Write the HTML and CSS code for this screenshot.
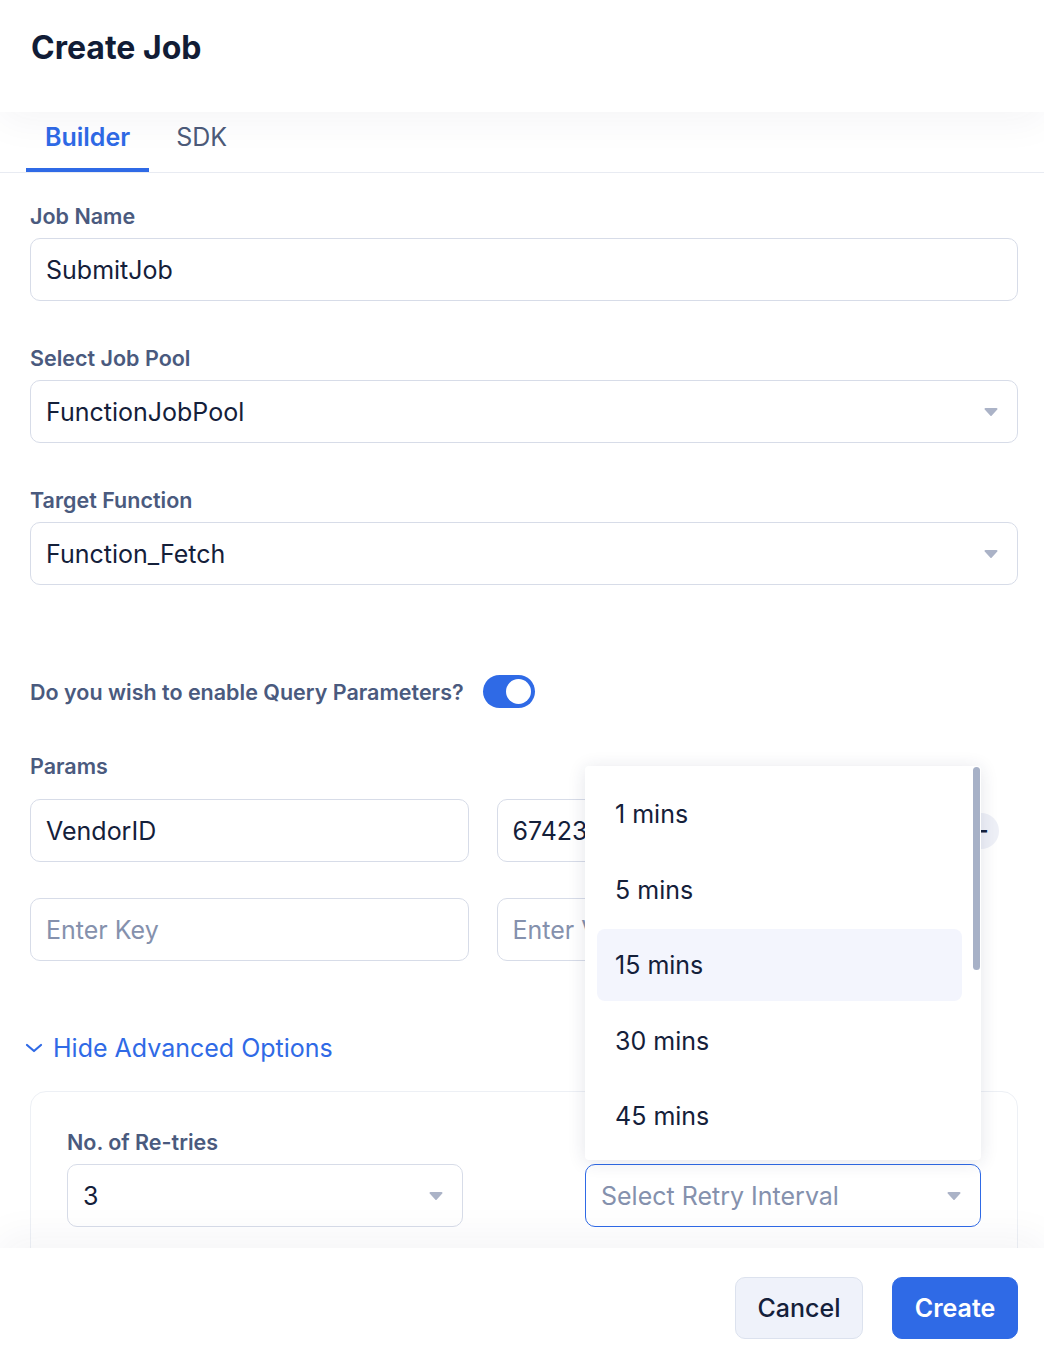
FILE: index.html
```html
<!DOCTYPE html>
<html lang="en">
<head>
    <meta charset="UTF-8">
    <meta name="viewport" content="width=device-width, initial-scale=1.0">
    <title>Create Job</title>
    <link rel="stylesheet" href="styles.css">
</head>
<body>
    <div class="modal-header">
        <h1>Create Job</h1>
    </div>

    <div class="tabs">
        <div class="tab active">Builder</div>
        <div class="tab">SDK</div>
    </div>

    <div class="modal-body">
        <div class="field">
            <label for="jobName">Job Name</label>
            <input type="text" id="jobName" value="SubmitJob">
        </div>

        <div class="field">
            <label>Select Job Pool</label>
            <div class="select-box">
                <span>FunctionJobPool</span>
                <svg class="caret" width="14" height="9" viewBox="0 0 14 9"><path d="M1.5 1h11a1 1 0 0 1 .8 1.6l-5.5 5.8a1 1 0 0 1-1.6 0L.7 2.6A1 1 0 0 1 1.5 1z" fill="#abb3c7"/></svg>
            </div>
        </div>

        <div class="field">
            <label>Target Function</label>
            <div class="select-box">
                <span>Function_Fetch</span>
                <svg class="caret" width="14" height="9" viewBox="0 0 14 9"><path d="M1.5 1h11a1 1 0 0 1 .8 1.6l-5.5 5.8a1 1 0 0 1-1.6 0L.7 2.6A1 1 0 0 1 1.5 1z" fill="#abb3c7"/></svg>
            </div>
        </div>

        <div class="toggle-row">
            <span>Do you wish to enable Query Parameters?</span>
            <div class="toggle on"><div class="knob"></div></div>
        </div>

        <div class="params">
            <label>Params</label>
            <div class="param-row">
                <input type="text" value="VendorID">
                <input type="text" value="674231">
                <button class="remove-btn">&minus;</button>
            </div>
            <div class="param-row">
                <input type="text" placeholder="Enter Key">
                <input type="text" placeholder="Enter Value">
            </div>
        </div>

        <div class="advanced-toggle">
            <svg width="18" height="10" viewBox="0 0 18 10"><path d="M2 2l7 6 7-6" fill="none" stroke="#2f6ae6" stroke-width="2.2" stroke-linecap="round" stroke-linejoin="round"/></svg>
            <span>Hide Advanced Options</span>
        </div>

        <div class="advanced-card">
            <div class="adv-grid">
                <div class="adv-field">
                    <label>No. of Re-tries</label>
                    <div class="select-box">
                        <span>3</span>
                        <svg class="caret" width="14" height="9" viewBox="0 0 14 9"><path d="M1.5 1h11a1 1 0 0 1 .8 1.6l-5.5 5.8a1 1 0 0 1-1.6 0L.7 2.6A1 1 0 0 1 1.5 1z" fill="#abb3c7"/></svg>
                    </div>
                </div>
                <div class="adv-field">
                    <label>Retry Interval</label>
                    <div class="select-wrap">
                        <div class="dropdown">
                            <div class="option">1 mins</div>
                            <div class="option">5 mins</div>
                            <div class="option hover">15 mins</div>
                            <div class="option">30 mins</div>
                            <div class="option">45 mins</div>
                            <div class="scroll-thumb"></div>
                        </div>
                        <div class="select-box focused">
                            <span class="placeholder">Select Retry Interval</span>
                            <svg class="caret" width="14" height="9" viewBox="0 0 14 9"><path d="M1.5 1h11a1 1 0 0 1 .8 1.6l-5.5 5.8a1 1 0 0 1-1.6 0L.7 2.6A1 1 0 0 1 1.5 1z" fill="#abb3c7"/></svg>
                        </div>
                    </div>
                </div>
            </div>
        </div>
    </div>

    <div class="modal-footer">
        <button class="btn cancel">Cancel</button>
        <button class="btn create">Create</button>
    </div>
</body>
</html>
```

FILE: styles.css
```css
* {
    box-sizing: border-box;
}

body {
    margin: 0;
    height: 100vh;
    display: flex;
    flex-direction: column;
    overflow: hidden;
    background-color: white;
    font-family: Inter, "Noto Sans", sans-serif;
    color: #14203a;
}

.modal-header {
    height: 112px;
    padding: 28px 31px 0;
    background-color: white;
    position: relative;
    z-index: 2;
    box-shadow: 0 8px 40px rgba(30, 45, 80, 0.05);
}

.modal-header h1 {
    margin: 0;
    font-size: 32px;
    line-height: 40px;
    font-weight: 700;
    color: #111c36;
}

.tabs {
    height: 61px;
    display: flex;
    gap: 8px;
    padding-left: 26px;
    border-bottom: 1px solid #e8ebf2;
}

.tab {
    display: flex;
    align-items: center;
    padding: 0 19px 6px;
    font-size: 25px;
    color: #4d5b79;
    border-bottom: 4px solid transparent;
}

.tab.active {
    color: #2f6ae6;
    font-weight: 600;
    border-bottom-color: #2f6ae6;
}

.modal-body {
    flex: 1;
    overflow: hidden;
    padding: 31px 26px 0 30px;
}

label {
    display: block;
    font-size: 21.5px;
    line-height: 24px;
    font-weight: 600;
    color: #4a5a7e;
}

.field {
    margin-bottom: 45px;
}

.field label {
    margin-bottom: 10px;
}

input {
    width: 100%;
    height: 63px;
    padding: 0 15px;
    border: 1px solid #d7dce8;
    border-radius: 10px;
    font-family: inherit;
    font-size: 25px;
    color: #14203a;
    background: white;
    outline: none;
}

input::placeholder {
    color: #8591ad;
}

.select-box {
    height: 63px;
    padding: 0 19px 0 15px;
    border: 1px solid #d7dce8;
    border-radius: 10px;
    display: flex;
    align-items: center;
    justify-content: space-between;
    font-size: 25px;
    background: white;
}

.select-box.focused {
    border-color: #2f6ae6;
}

.placeholder {
    color: #8591ad;
}

.toggle-row {
    margin-top: 90px;
    display: flex;
    align-items: center;
    gap: 19px;
    font-size: 21.5px;
    font-weight: 600;
    color: #4a5a7e;
}

.toggle {
    width: 52px;
    height: 33px;
    border-radius: 17px;
    background-color: #2f6ae6;
    padding: 4px;
    display: flex;
    justify-content: flex-end;
}

.knob {
    width: 25px;
    height: 25px;
    border-radius: 50%;
    background: white;
}

.params {
    margin-top: 46px;
}

.params label {
    margin-bottom: 21px;
}

.param-row {
    display: grid;
    grid-template-columns: 1fr 1fr 36px;
    column-gap: 28px;
    align-items: center;
    margin-right: 19px;
    margin-bottom: 36px;
}

.remove-btn {
    width: 36px;
    height: 36px;
    border: none;
    border-radius: 50%;
    background-color: #eef0f7;
    color: #14203a;
    font-size: 24px;
    font-weight: 600;
    padding: 0;
}

.advanced-toggle {
    margin-top: 72px;
    margin-left: -5px;
    display: flex;
    align-items: center;
    gap: 10px;
    font-size: 25px;
    line-height: 30px;
    color: #2f6ae6;
}

.advanced-card {
    margin-top: 28px;
    border: 1px solid #edf0f5;
    border-radius: 16px;
    padding: 38px 36px 40px;
}

.adv-grid {
    display: grid;
    grid-template-columns: 1fr 1fr;
    column-gap: 122px;
}

.adv-field label {
    margin-bottom: 10px;
}

.select-wrap {
    position: relative;
}

.dropdown {
    position: absolute;
    left: 0;
    right: 0;
    bottom: calc(100% + 4px);
    height: 394px;
    padding: 12px 19px 0 12px;
    background: white;
    border-radius: 4px;
    box-shadow: 0 2px 18px rgba(30, 45, 80, 0.12);
    z-index: 5;
    overflow: hidden;
}

.option {
    height: 72px;
    margin-bottom: 3.5px;
    padding-left: 18px;
    display: flex;
    align-items: center;
    font-size: 25px;
    color: #14203a;
    border-radius: 8px;
}

.option.hover {
    background-color: #f3f5fd;
}

.scroll-thumb {
    position: absolute;
    top: 1px;
    right: 1px;
    width: 7px;
    height: 203px;
    border-radius: 4px;
    background-color: #a7b1c7;
}

.modal-footer {
    height: 120px;
    padding: 29px 26px 0 0;
    display: flex;
    justify-content: flex-end;
    gap: 29px;
    background: white;
    position: relative;
    z-index: 2;
    box-shadow: 0 -10px 40px rgba(30, 45, 80, 0.05);
}

.btn {
    height: 62px;
    padding: 0 16px;
    border-radius: 10px;
    font-family: inherit;
    font-size: 25px;
    cursor: pointer;
}

.btn.cancel {
    width: 128px;
    background-color: #eff2fa;
    border: 1px solid #dce2ee;
    color: #14203a;
    font-weight: 500;
}

.btn.create {
    width: 126px;
    background-color: #2f6ae6;
    border: 1px solid #2f6ae6;
    color: white;
    font-weight: 600;
}

.btn.create:hover {
    background-color: #2458c8;
}
```
